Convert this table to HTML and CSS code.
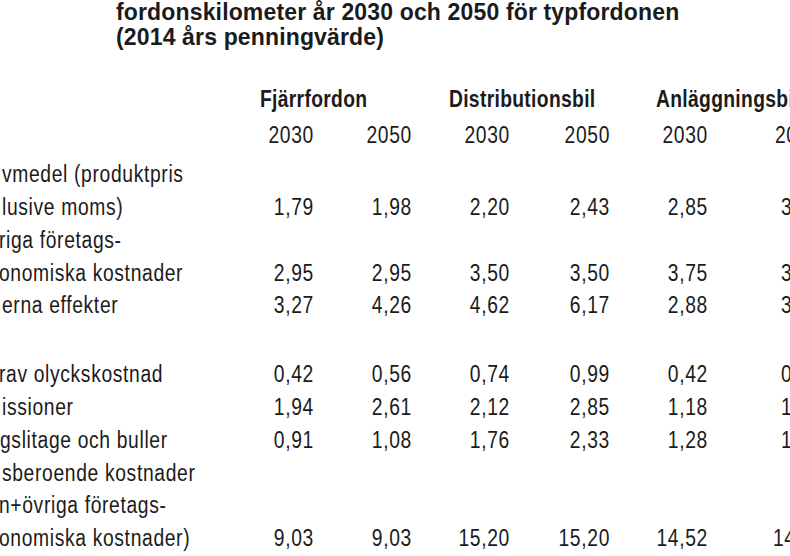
FILE: index.html
```html
<!DOCTYPE html>
<html lang="sv">
<head>
<meta charset="utf-8">
<title>Kostnader per fordonskilometer</title>
<link rel="stylesheet" href="styles.css">
</head>
<body>
<div class="page">
  <h1 class="title">fordonskilometer år 2030 och 2050 för typfordonen<br>(2014 års penningvärde)</h1>
  <div class="table">
    <div class="cell"></div>
    <div class="group g1">Fjärrfordon</div>
    <div class="group g2">Distributionsbil</div>
    <div class="group g3">Anläggningsbil</div>

    <div class="cell year-row"></div>
    <div class="num year-row">2030</div>
    <div class="num year-row">2050</div>
    <div class="num year-row">2030</div>
    <div class="num year-row">2050</div>
    <div class="num year-row">2030</div>
    <div class="edge year-row e-year">2050</div>

    <div class="label">vmedel (produktpris<br>lusive moms)</div>
    <div class="num">1,79</div><div class="num">1,98</div><div class="num">2,20</div><div class="num">2,43</div><div class="num">2,85</div><div class="edge">3</div>

    <div class="label"><span class="cut">riga företags-</span><br><span class="cut">onomiska kostnader</span></div>
    <div class="num">2,95</div><div class="num">2,95</div><div class="num">3,50</div><div class="num">3,50</div><div class="num">3,75</div><div class="edge">3</div>

    <div class="label">erna effekter</div>
    <div class="num">3,27</div><div class="num">4,26</div><div class="num">4,62</div><div class="num">6,17</div><div class="num">2,88</div><div class="edge">3</div>

    <div class="spacer"></div>

    <div class="label"><span class="cut">rav olyckskostnad</span></div>
    <div class="num">0,42</div><div class="num">0,56</div><div class="num">0,74</div><div class="num">0,99</div><div class="num">0,42</div><div class="edge">0</div>

    <div class="label">issioner</div>
    <div class="num">1,94</div><div class="num">2,61</div><div class="num">2,12</div><div class="num">2,85</div><div class="num">1,18</div><div class="edge">1</div>

    <div class="label"><span class="cut2">gslitage och buller</span></div>
    <div class="num">0,91</div><div class="num">1,08</div><div class="num">1,76</div><div class="num">2,33</div><div class="num">1,28</div><div class="edge">1</div>

    <div class="label">sberoende kostnader<br><span class="cut">n+övriga företags-</span><br><span class="cut">onomiska kostnader)</span></div>
    <div class="num">9,03</div><div class="num">9,03</div><div class="num">15,20</div><div class="num">15,20</div><div class="num">14,52</div><div class="edge e-wide">14</div>
  </div>
</div>
</body>
</html>
```

FILE: styles.css
```css
html, body {
  margin: 0;
  padding: 0;
  background: #ffffff;
}

body {
  width: 790px;
  height: 556px;
  overflow: hidden;
  color: #1b1b1b;
}

.page {
  width: 790px;
  height: 556px;
  overflow: hidden;
}

.title {
  margin: 0;
  padding: 0 0 0 116px;
  font-family: "Liberation Sans", Arial, sans-serif;
  font-weight: bold;
  font-size: 23px;
  line-height: 25px;
  letter-spacing: 0.15px;
  white-space: nowrap;
}

/* condensed grotesque look: Arial metrics narrowed to 82 % */
.table {
  display: grid;
  grid-template-columns: 264.6px 119.5px 119.5px 119.5px 122px 119.5px 146.3px;
  width: 1011px;
  margin-top: 33.2px;
  transform: scaleX(0.82);
  transform-origin: 0 0;
  font-family: "Liberation Sans", Arial, sans-serif;
  font-size: 23.5px;
  line-height: 32.8px;
  letter-spacing: 0.8px;
  white-space: nowrap;
}

.group {
  grid-column: span 2;
  font-weight: bold;
  line-height: 33px;
  margin-bottom: 3px;
  letter-spacing: 0.4px;
}

.g1 { padding-left: 52.4px; }
.g2 { padding-left: 43.9px; }
.g3 { padding-left: 54.9px; }

.year-row {
  line-height: 33px;
  margin-bottom: 6px;
}

.label {
  padding-left: 2.4px;
}

.cut {
  display: inline-block;
  margin-left: -3.7px;
}

.cut2 {
  display: inline-block;
  margin-left: -2.4px;
}

.num {
  text-align: right;
  align-self: end;
  padding-right: 1.2px;
}

.edge {
  align-self: end;
  padding-left: 87.8px;
}

.e-year { padding-left: 80.5px; }
.e-wide { padding-left: 78px; }

.spacer {
  grid-column: 1 / -1;
  height: 36px;
}
```
